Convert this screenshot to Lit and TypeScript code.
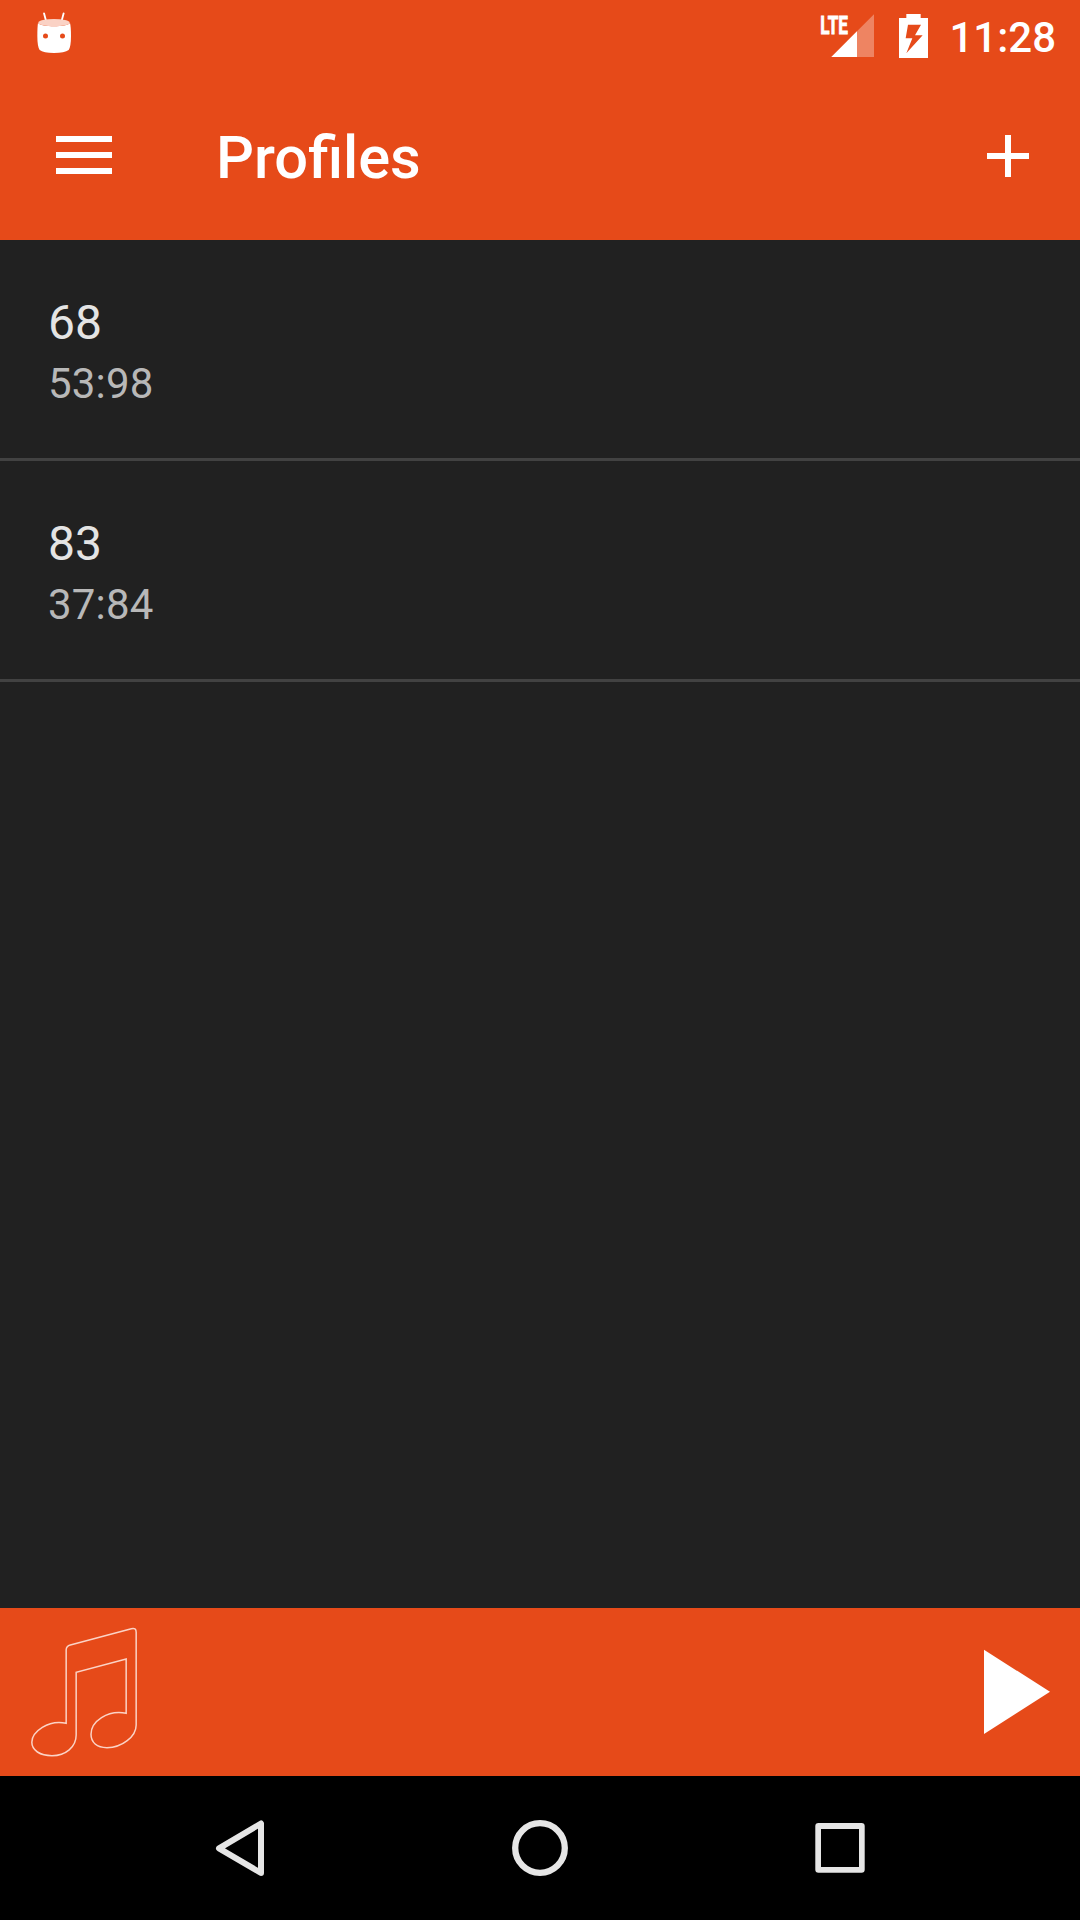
import { LitElement, html, css } from "lit";
import { customElement, property } from "lit/decorators.js";

interface Profile {
  name: string;
  detail: string;
}

@customElement("status-bar")
class StatusBar extends LitElement {
  static styles = css`
    :host {
      display: flex;
      height: 72px;
      padding: 0 24px 0 20px;
      color: #fff;
    }
    svg {
      display: block;
      flex: none;
    }
    .system {
      display: flex;
      margin-left: auto;
    }
    .battery {
      margin-left: 22px;
    }
    .time {
      width: 110px;
      margin-left: 16px;
      text-align: right;
      font-size: 42px;
      font-weight: 500;
      line-height: 76px;
      white-space: nowrap;
    }
    .lte {
      font-family: Roboto, sans-serif;
      font-weight: 700;
      font-size: 77px;
      stroke: #fff;
      stroke-width: 2.5px;
    }
  `;

  render() {
    return html`
      <svg width="70" height="72" viewBox="0 0 210 216" fill="#fff">
        <path d="M72 40L79 66M131 40L124 66" stroke="#fff" stroke-width="5.5" stroke-linecap="round" />
        <path
          fill-rule="evenodd"
          d="M54 69C64 82 141 82 150 69Q153 80 153 108Q153 140 146 150Q134 159 102 159Q70 159 59 150Q52 140 52 108Q52 80 54 69ZM69 108a7.500 7.500 0 1 0 15 0a7.500 7.500 0 1 0 -15 0ZM120 108a7.500 7.500 0 1 0 15 0a7.500 7.500 0 1 0 -15 0Z"
        />
        <ellipse cx="102" cy="68" rx="47" ry="11" fill="#fad2c5" />
      </svg>
      <div class="system">
        <svg width="55" height="72" viewBox="30 0 165 216" fill="#fff">
          <text class="lte" x="31" y="100.500" textLength="83" lengthAdjust="spacingAndGlyphs">LTE</text>
          <path d="M64 171L192 43V171Z" opacity=".32" />
          <path d="M64 171L141 94V171Z" />
        </svg>
        <svg class="battery" width="33" height="72" viewBox="261 0 99 216" fill="#fff">
          <path
            fill-rule="evenodd"
            d="M289 42H332V54H354V174H267V54H289ZM294 74L287 115H307L289 160L338 106H315L333 74Z"
          />
        </svg>
        <div class="time">11:28</div>
      </div>
    `;
  }
}

@customElement("title-bar")
class TitleBar extends LitElement {
  @property() heading = "";

  static styles = css`
    :host {
      display: flex;
      align-items: flex-start;
      height: 168px;
      padding: 0 48px 0 48px;
      box-sizing: border-box;
      color: #fff;
    }
    svg {
      display: block;
      flex: none;
      margin-top: 48px;
    }
    .heading {
      flex: 1;
      margin: 51px 0 0 96px;
      font-size: 59.6px;
      font-weight: 500;
      line-height: 70px;
    }
    .add {
      margin-right: -12px;
    }
  `;

  render() {
    return html`
      <svg width="72" height="72" viewBox="0 0 72 72" fill="#fff">
        <path d="M8 16h56v6H8zM8 32h56v6H8zM8 48h56v6H8z" />
      </svg>
      <div class="heading">${this.heading}</div>
      <svg class="add" width="72" height="72" viewBox="0 0 72 72" fill="#fff">
        <path d="M33 15h6v18h18v6H39v18h-6V39H15v-6h18z" />
      </svg>
    `;
  }
}

@customElement("profile-list")
class ProfileList extends LitElement {
  @property({ attribute: false }) profiles: Profile[] = [];

  static styles = css`
    :host {
      display: block;
    }
    .row {
      height: 221px;
      padding: 55px 48px 0;
      box-sizing: border-box;
      border-bottom: 3px solid #424242;
    }
    .name {
      font-size: 48px;
      line-height: 56px;
      color: #e4e4e4;
    }
    .detail {
      margin-top: 8px;
      font-size: 42px;
      letter-spacing: 0.2px;
      line-height: 49px;
      color: #b8b8b8;
    }
  `;

  render() {
    return this.profiles.map(
      (p) => html`
        <div class="row">
          <div class="name">${p.name}</div>
          <div class="detail">${p.detail}</div>
        </div>
      `,
    );
  }
}

@customElement("player-bar")
class PlayerBar extends LitElement {
  static styles = css`
    :host {
      display: flex;
      justify-content: space-between;
      height: 168px;
      background: #e64a19;
    }
    svg {
      display: block;
    }
  `;

  render() {
    return html`
      <svg width="160" height="168" viewBox="0 39 480 504" fill="none" stroke="#fbd3c6" stroke-width="4.500">
        <path
          d="M198.500 385V164Q199 153 211 150L394 101Q408.500 97 408.500 112V390C408.500 425 366 458 321 458C290 458 273 442 273 418C273 380 322 344 378.500 355V192L228.500 232V420C228.500 456 197 482 156 482C120 482 95.500 466 95.500 442C95.500 411 145 373 198.500 385Z"
        />
      </svg>
      <svg width="120" height="168" viewBox="0 24 360 504" fill="#fff">
        <path d="M72 149L270 275.500L72 402Z" />
      </svg>
    `;
  }
}

@customElement("nav-bar")
class NavBar extends LitElement {
  static styles = css`
    :host {
      display: flex;
      justify-content: center;
      gap: 180px;
      height: 144px;
      background: #000;
    }
    svg {
      display: block;
    }
  `;

  render() {
    return html`
      <svg width="120" height="144" viewBox="0 0 120 144" fill="none" stroke="#e6e6e6" stroke-width="6" stroke-linejoin="round">
        <path d="M39 72.300L81 47.500V97Z" />
      </svg>
      <svg width="120" height="144" viewBox="0 0 120 144" fill="none" stroke="#e6e6e6" stroke-width="6.300">
        <circle cx="60" cy="72" r="24.800" />
      </svg>
      <svg width="120" height="144" viewBox="0 0 120 144">
        <path
          d="M38.500 47H81.500Q84.700 47 84.700 50V93.500Q84.700 96.700 81.500 96.700H38.500Q35.300 96.700 35.300 93.500V50Q35.300 47 38.500 47ZM41 53V91H79V53Z"
          fill="#e6e6e6"
          fill-rule="evenodd"
        />
      </svg>
    `;
  }
}

@customElement("app-root")
class AppRoot extends LitElement {
  private profiles: Profile[] = [
    { name: "68", detail: "53:98" },
    { name: "83", detail: "37:84" },
  ];

  static styles = css`
    :host {
      display: flex;
      flex-direction: column;
      width: 1080px;
      height: 1920px;
      overflow: hidden;
      background: #212121;
      font-family: Roboto, sans-serif;
    }
    .header {
      background: #e64a19;
    }
    .list {
      flex: 1;
    }
  `;

  render() {
    return html`
      <div class="header">
        <status-bar></status-bar>
        <title-bar heading="Profiles"></title-bar>
      </div>
      <profile-list class="list" .profiles=${this.profiles}></profile-list>
      <player-bar></player-bar>
      <nav-bar></nav-bar>
    `;
  }
}
